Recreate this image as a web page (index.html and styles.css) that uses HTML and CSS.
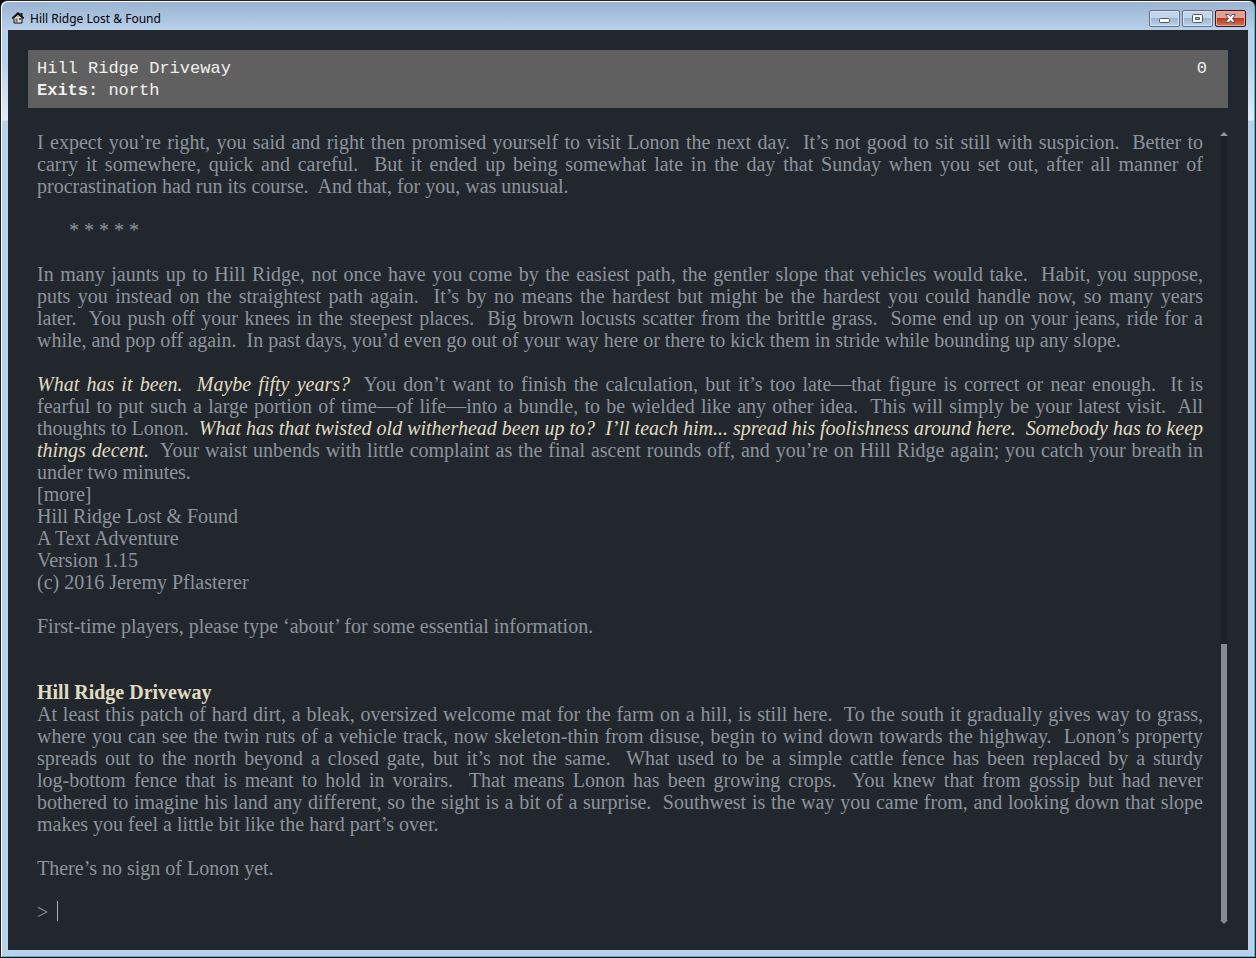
FILE: index.html
```html
<!DOCTYPE html>
<html lang="en">
<head>
<meta charset="utf-8">
<title>Hill Ridge Lost &amp; Found</title>
<link rel="stylesheet" href="styles.css">
</head>
<body>
<div class="window">
  <header class="titlebar">
    <svg class="app-icon" width="12" height="12" viewBox="0 0 12 12" aria-hidden="true">
      <path d="M2 6v5h8V6L6 2z" fill="#ddd" stroke="#111"/>
      <path d="M0 6.500L6 1L12 6.500" fill="none" stroke="#111" stroke-width="1.600"/>
      <path d="M8.500 1h2v4h-2z" fill="#111"/>
      <path d="M4 4.500L6 3l2 1.500z" fill="#777"/>
      <path d="M3.500 6.500h2v4h-2z" fill="#a65a42"/>
      <path d="M7 6h2v2H7z" fill="#555"/>
    </svg>
    <span class="title">Hill Ridge Lost &amp; Found</span>
    <div class="controls">
      <button class="control" type="button" aria-label="Minimize">
        <svg width="29" height="15" viewBox="0 0 29 15"><rect x="9.500" y="7.500" width="10" height="4" rx="1" fill="#fff" stroke="#535666"/></svg>
      </button>
      <button class="control" type="button" aria-label="Maximize">
        <svg width="29" height="15" viewBox="0 0 29 15"><rect x="9.500" y="3.500" width="10" height="8" rx="1" fill="#fff" stroke="#535666"/><path d="M12.500 6.500h4v2h-4z" fill="#9bb6d3" stroke="#535666"/></svg>
      </button>
      <button class="control close" type="button" aria-label="Close">
        <svg width="29" height="15" viewBox="0 0 29 15"><path d="M9.500 3.500h3.500l1.500 2 1.500-2h3.500l-3 4 3 4H16l-1.500-2-1.500 2H9.500l3-4z" fill="#fff" stroke="#535666"/></svg>
      </button>
    </div>
  </header>
  <main class="game">
    <div class="status">
      <div class="place">
        <div>Hill Ridge Driveway</div>
        <div><b>Exits:</b> north</div>
      </div>
      <div class="score">0</div>
    </div>
    <div class="viewport">
      <div class="transcript">
        <p class="para"><span class="line">I expect you’re right, you said and right then promised yourself to visit Lonon the next day.  It’s not good to sit still with suspicion.  Better to</span>
        <span class="line">carry it somewhere, quick and careful.  But it ended up being somewhat late in the day that Sunday when you set out, after all manner of</span>
        <span class="line last">procrastination had run its course.  And that, for you, was unusual.</span></p>
        <p class="stars">* * * * *</p>
        <p class="para"><span class="line">In many jaunts up to Hill Ridge, not once have you come by the easiest path, the gentler slope that vehicles would take.  Habit, you suppose,</span>
        <span class="line">puts you instead on the straightest path again.  It’s by no means the hardest but might be the hardest you could handle now, so many years</span>
        <span class="line">later.  You push off your knees in the steepest places.  Big brown locusts scatter from the brittle grass.  Some end up on your jeans, ride for a</span>
        <span class="line last">while, and pop off again.  In past days, you’d even go out of your way here or there to kick them in stride while bounding up any slope.</span></p>
        <p class="para"><span class="line"><em>What has it been.  Maybe fifty years?</em>  You don’t want to finish the calculation, but it’s too late—that figure is correct or near enough.  It is</span>
        <span class="line">fearful to put such a large portion of time—of life—into a bundle, to be wielded like any other idea.  This will simply be your latest visit.  All</span>
        <span class="line">thoughts to Lonon.  <em>What has that twisted old witherhead been up to?  I’ll teach him... spread his foolishness around here.  Somebody has to keep</em></span>
        <span class="line"><em>things decent.</em>  Your waist unbends with little complaint as the final ascent rounds off, and you’re on Hill Ridge again; you catch your breath in</span>
        <span class="line last">under two minutes.</span>
        <span class="line last">[more]</span>
        <span class="line last">Hill Ridge Lost &amp; Found</span>
        <span class="line last">A Text Adventure</span>
        <span class="line last">Version 1.15</span>
        <span class="line last">(c) 2016 Jeremy Pflasterer</span></p>
        <p class="para intro"><span class="line last">First-time players, please type ‘about’ for some essential information.</span></p>
        <h2 class="room">Hill Ridge Driveway</h2>
        <p class="para"><span class="line">At least this patch of hard dirt, a bleak, oversized welcome mat for the farm on a hill, is still here.  To the south it gradually gives way to grass,</span>
        <span class="line">where you can see the twin ruts of a vehicle track, now skeleton-thin from disuse, begin to wind down towards the highway.  Lonon’s property</span>
        <span class="line">spreads out to the north beyond a closed gate, but it’s not the same.  What used to be a simple cattle fence has been replaced by a sturdy</span>
        <span class="line">log-bottom fence that is meant to hold in vorairs.  That means Lonon has been growing crops.  You knew that from gossip but had never</span>
        <span class="line">bothered to imagine his land any different, so the sight is a bit of a surprise.  Southwest is the way you came from, and looking down that slope</span>
        <span class="line last">makes you feel a little bit like the hard part’s over.</span></p>
        <p class="para"><span class="line last">There’s no sign of Lonon yet.</span></p>
        <label class="prompt"><span>&gt;</span><input class="command" type="text" aria-label="Command" autocomplete="off"></label>
      </div>
      <div class="scrollbar" aria-hidden="true">
        <div class="arrow-up"></div>
        <div class="track"></div>
        <div class="thumb"></div>
        <div class="arrow-down"></div>
      </div>
    </div>
  </main>
</div>
</body>
</html>
```
FILE: styles.css
```css
* { box-sizing: border-box; }
body { margin: 0; background: #000; }
p, h2 { margin: 0; }
.window {
  min-height: 100vh;
  display: flex;
  flex-direction: column;
  padding: 2px 6px 6px;
  border: 1px solid #222;
  border-bottom-color: #000;
  border-radius: 7px 7px 0 0;
  background: linear-gradient(#98b2d0, #b9d1ea 30px, #b9d1ea 60px, #dfebf8 119px, #b9d1ea 120px);
  box-shadow: inset 1px 1px #fff, inset -1px -1px #27c8e8;
}
.titlebar {
  display: flex;
  height: 27px;
  padding-left: 5px;
  font: 12px/16px "Noto Sans", "Open Sans", sans-serif;
  color: #000;
}
.app-icon { margin-top: 9px; }
.title { margin: 8px 0 0 6px; }
.controls { display: flex; gap: 2px; margin: 7px 3px 0 auto; height: 17px; }
.control {
  display: flex;
  width: 31px;
  height: 17px;
  padding: 0;
  border: 1px solid #626f88;
  border-radius: 2px;
  background: linear-gradient(#c2d5ea 50%, #9cb6d3 50%, #bcd2ea);
  box-shadow: inset 0 0 0 1px #d6e4f3;
}
.close {
  border-color: #43141c;
  background: linear-gradient(#e2a092 50%, #b93a21 50%, #d27657);
  box-shadow: inset 0 0 0 1px #e5aa9c;
}
.game {
  flex: 1;
  display: flex;
  flex-direction: column;
  margin: 0 1px 1px;
  padding: 20px 20px 26px;
  background: #22272e;
}
.status {
  display: flex;
  justify-content: space-between;
  padding: 8px 21px 6px 9px;
  background: #606060;
  color: #f0f0ee;
  font: 17px/22px "Liberation Mono", monospace;
}
.viewport { flex: 1; display: flex; padding-top: 23px; }
.transcript {
  flex: 1;
  padding: 0 17px 0 9px;
  color: #8d949b;
  font: 20px/22px "Liberation Serif", serif;
}
.para { margin-bottom: 22px; }
.line { display: block; white-space: pre-wrap; text-align: justify; text-align-last: justify; }
.last { text-align-last: left; }
.para em { color: #e0dcc0; }
.stars { margin-bottom: 22px; padding-left: 32px; }
.intro { margin-bottom: 44px; }
.room { color: #e0dcc0; font-size: 20px; line-height: 22px; }
.prompt { display: flex; gap: 9px; height: 22px; }
.command {
  flex: 1;
  height: 20px;
  padding: 0;
  border: 0;
  border-left: 1px solid #b0b5ba;
  outline: 0;
  background: none;
  color: inherit;
  font: inherit;
}
.scrollbar { width: 8px; display: flex; flex-direction: column; align-items: center; }
.arrow-up { border: 4px solid transparent; border-top: 0; border-bottom-color: #8d949b; margin-top: 1px; }
.track { width: 6px; flex: 508; background: #1c2127; }
.thumb { width: 6px; flex: 276; background: #858b92; }
.arrow-down { border: 4px solid transparent; border-bottom: 0; border-top-color: #858b92; }
```
